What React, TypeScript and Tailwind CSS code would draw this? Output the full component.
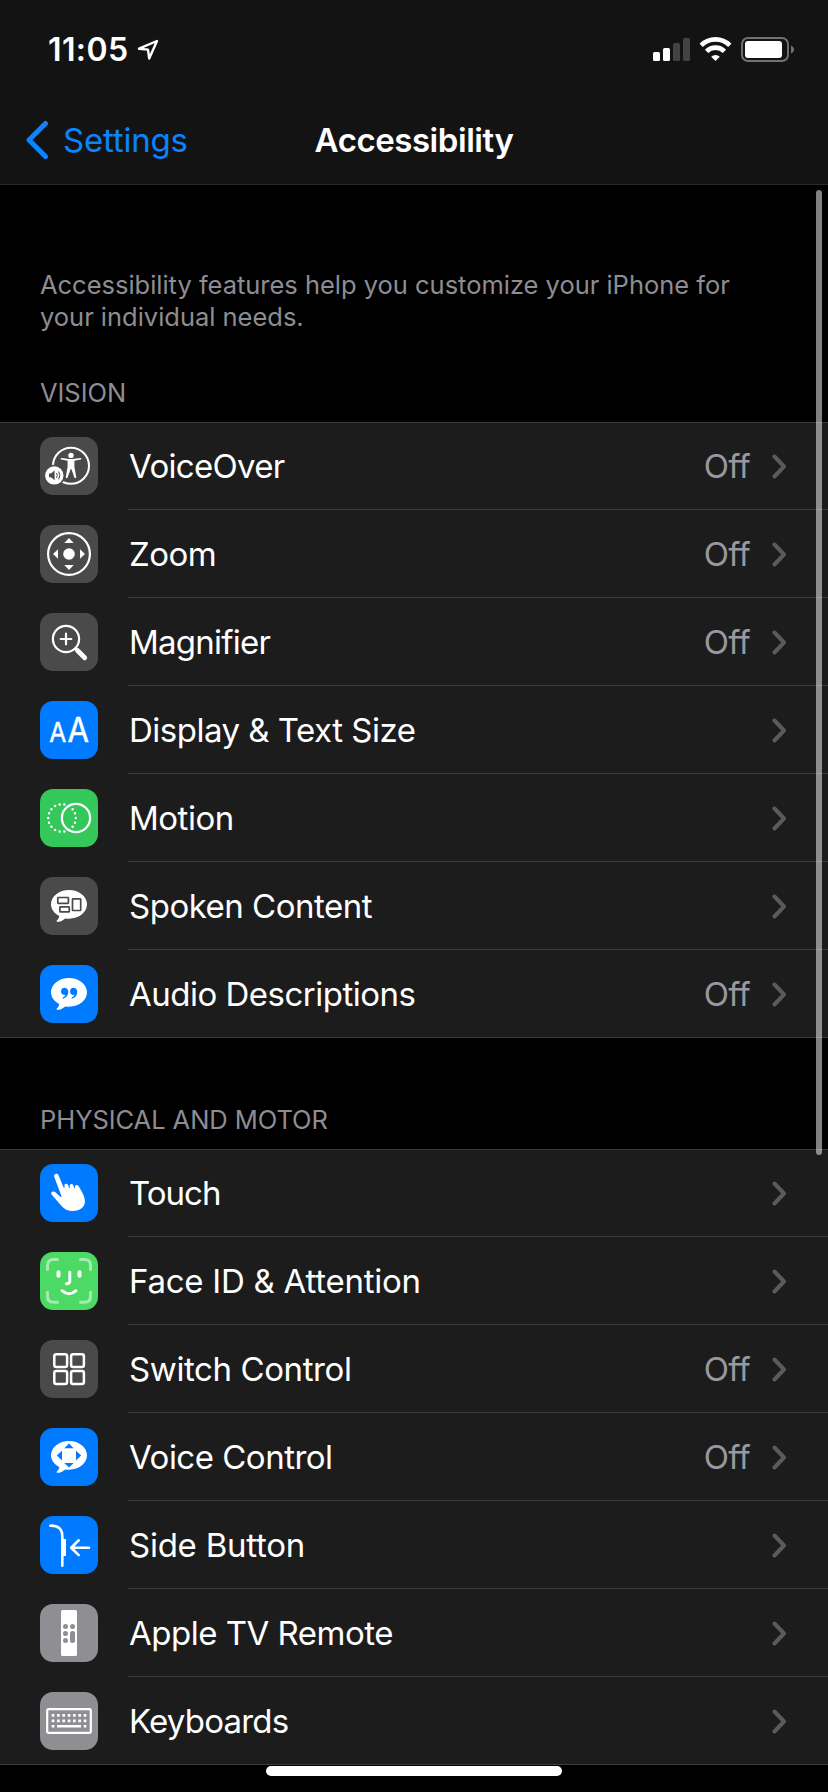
import { ReactNode } from 'react'

type Item = {
  label: string
  icon: ReactNode
  color: string
  value?: string
  tracking?: string
}

const BUBBLE =
  'M29 13c10 0 18 6.3 18 14.3s-8 14.4-18 14.4c-1.3 0-2.5-.1-3.7-.3-2.3 1.9-5.5 3.5-8.2 3.4-.7 0-.8-.7-.3-1.2 1.5-1.4 2.3-2.7 2.5-4.5C14.3 36.5 11 32.2 11 27.3 11 19.3 19 13 29 13z'

const VoiceOverIcon = () => (
  <>
    <circle cx="31" cy="28.7" r="18" fill="none" stroke="white" strokeWidth="2" />
    <circle cx="31" cy="18.4" r="2.7" />
    <path d="M21.5 20.9l7.5 1.2h4l7.5-1.2c1-.1 1.2 1.3.2 1.5l-6.3 1.4v6l1.8 10.3c.2 1.3-1.4 1.6-1.8.5L31.3 32h-.6l-3.1 8.6c-.4 1.1-2 .8-1.8-.5l1.8-10.3v-6l-6.3-1.4c-1-.2-.8-1.6.2-1.5z" />
    <circle cx="14.3" cy="38.4" r="10.7" fill="#4a4a4a" />
    <circle cx="14.3" cy="38.4" r="9.2" />
    <path d="M9 36.5h2l3.6-3v9.8l-3.6-3H9z" fill="#4a4a4a" />
    <path
      d="M16.5 36q1.6 2.4 0 4.8M18.6 34.5q2.6 3.9 0 7.8"
      fill="none"
      stroke="#4a4a4a"
      strokeWidth="1"
    />
  </>
)

const ZoomIcon = () => (
  <>
    <circle cx="29" cy="29" r="20.9" fill="none" stroke="white" strokeWidth="2.2" />
    <circle cx="29" cy="29" r="5.8" />
    <path d="M29 13l4.7 5h-9.4zM29 45l4.7-5h-9.4zM13 29l5-4.7v9.4zM45 29l-5-4.7v9.4z" />
  </>
)

const MagnifierIcon = () => (
  <g fill="none" stroke="white" strokeLinecap="round">
    <circle cx="26" cy="26" r="13.1" strokeWidth="2.2" />
    <path d="M20.7 26h10.6M26 20.7v10.6" strokeWidth="2.2" />
    <path d="M35.8 35.8l.8.8" strokeWidth="3" />
    <path d="M37.5 37.5l7.2 7.2" strokeWidth="4.8" />
  </g>
)

const TextSizeIcon = () => (
  <g stroke="white" strokeWidth=".5" strokeLinejoin="round">
    <text x="9.3" y="41.2" fontSize="26.5" textLength="17" lengthAdjust="spacingAndGlyphs">
      A
    </text>
    <text x="27.5" y="41.2" fontSize="33.5" textLength="21.5" lengthAdjust="spacingAndGlyphs">
      A
    </text>
  </g>
)

const MotionIcon = () => (
  <g fill="none" stroke="white">
    <circle cx="36" cy="29" r="14.1" strokeWidth="2.2" />
    <circle
      cx="22"
      cy="29"
      r="13.8"
      strokeWidth="2.5"
      strokeLinecap="round"
      pathLength="18"
      strokeDasharray="0 1"
    />
  </g>
)

const SpokenIcon = () => (
  <>
    <path d={BUBBLE} />
    <g fill="none" stroke="#4a4a4a" strokeWidth="1.7">
      <rect x="17.8" y="20.5" width="10.6" height="5.8" rx=".5" />
      <rect x="19.9" y="29.9" width="9.4" height="5" rx=".5" />
      <rect x="32.5" y="21.9" width="8.2" height="11.6" rx=".5" />
    </g>
  </>
)

const AudioIcon = () => (
  <>
    <path d={BUBBLE} />
    <path
      d="M24.5 22.8c2.3 0 3.8 1.9 3.8 4.3 0 3.2-2.2 5.7-4.8 6.5-1 .3-1.3-.8-.5-1.2 1.2-.6 2.1-1.5 2.5-2.6-2.6.5-4.5-1.2-4.5-3.4 0-2.1 1.5-3.6 3.5-3.6zM33.5 22.8c2.3 0 3.8 1.9 3.8 4.3 0 3.2-2.2 5.7-4.8 6.5-1 .3-1.3-.8-.5-1.2 1.2-.6 2.1-1.5 2.5-2.6-2.6.5-4.5-1.2-4.5-3.4 0-2.1 1.5-3.6 3.5-3.6z"
      fill="#007aff"
    />
  </>
)

const TouchIcon = () => (
  <path d="M14.2 12.8c-1-2.9 3.1-4.5 4.3-1.6l5 12c.3.7 1.1.6 1.1-.2l-.2-1.2c-.3-2.3 2.8-2.8 3.6-.8l1.1 2.8c.2.5.8.4.8-.1l-.3-1.6c-.2-2.3 2.9-2.9 3.7-.7l1 2.7c.2.5.8.4.8-.2l-.2-1c-.2-2.2 2.6-2.8 3.7-.8 3 5.5 6.3 10 6.3 15.400 0 5.6-4.9 9.5-12.3 9.5-4.8 0-8.3-1.7-11.3-5.2l-9.5-11c-1.9-2.4 1.3-4.5 3.3-2.7l5.3 4.7c.7.6 1.4.3 1.1-.6z" />
)

const FaceIcon = () => (
  <g fill="none" stroke="white" strokeLinecap="round">
    <path
      d="M7.5 17.5v-4q0-6 6-6h4M40.5 7.5h4q6 0 6 6v4M50.5 40.3v4q0 6-6 6h-4M17.5 50.3h-4q-6 0-6-6v-4"
      strokeWidth="3"
      strokeOpacity=".5"
    />
    <path d="M18.5 20.3v3.5M39.5 20.3v3.5" strokeWidth="4" />
    <path d="M29.8 20.3v8.700q0 2.7-2.8 2.7h-.6" strokeWidth="2.9" />
    <path d="M22 38.7q7 6.2 14 0" strokeWidth="2.9" />
  </g>
)

const SwitchIcon = () => (
  <g fill="none" stroke="white" strokeWidth="2.5">
    <rect x="14.3" y="14.3" width="12.8" height="12.8" rx="2" />
    <rect x="31.1" y="14.3" width="12.8" height="12.8" rx="2" />
    <rect x="14.3" y="31.1" width="12.8" height="12.8" rx="2" />
    <rect x="31.1" y="31.1" width="12.8" height="12.8" rx="2" />
  </g>
)

const VoiceControlIcon = () => (
  <>
    <path d={BUBBLE} />
    <path
      d="M24.3 20.2L29 15.6l4.7 4.6zM24.3 34.9l4.7 4.6 4.7-4.6zM22 22.7l-5.2 4.9 5.2 4.9zM36 22.7l5.2 4.9-5.2 4.9z"
      fill="#007aff"
    />
  </>
)

const SideButtonIcon = () => (
  <>
    <g fill="none" stroke="white" strokeWidth="2.6" strokeLinecap="round" strokeLinejoin="round">
      <path d="M10.3 9.7c7.5-.4 12 3.3 12 10.3v29.8" />
      <path d="M49 31.7H31.3M38.7 24.3l-7.5 7.4 7.5 7.4" />
    </g>
    <rect x="22" y="23" width="4" height="17" rx=".6" />
  </>
)

const RemoteIcon = () => (
  <>
    <rect x="21" y="6" width="16" height="46" rx="1.5" />
    <g fill="#8e8e93">
      <circle cx="25.5" cy="22.4" r="2.5" />
      <circle cx="32.5" cy="22.4" r="2.5" />
      <circle cx="25.5" cy="29.4" r="2.5" />
      <circle cx="25.5" cy="36.4" r="2.5" />
      <rect x="30" y="26.9" width="5" height="12" rx="2.5" />
    </g>
  </>
)

const KeyboardIcon = () => (
  <g fill="none" stroke="white">
    <rect x="7.2" y="17.2" width="43.6" height="23.6" rx="1.5" strokeWidth="2.2" />
    <path d="M11.7 23.3h34.7M11.7 28.8h34.7" strokeWidth="2.7" strokeDasharray="2.7 2.63" />
    <path d="M11.7 34.3h2.7M17 34.3h24M43.7 34.3h2.7" strokeWidth="2.6" />
  </g>
)

const vision: Item[] = [
  {
    label: 'VoiceOver',
    icon: <VoiceOverIcon />,
    color: 'bg-[#4a4a4a]',
    value: 'Off',
    tracking: 'tracking-[-0.7px]',
  },
  { label: 'Zoom', icon: <ZoomIcon />, color: 'bg-[#4a4a4a]', value: 'Off' },
  {
    label: 'Magnifier',
    icon: <MagnifierIcon />,
    color: 'bg-[#4a4a4a]',
    value: 'Off',
    tracking: 'tracking-[-0.75px]',
  },
  { label: 'Display & Text Size', icon: <TextSizeIcon />, color: 'bg-[#007aff]' },
  { label: 'Motion', icon: <MotionIcon />, color: 'bg-[#34c759]' },
  { label: 'Spoken Content', icon: <SpokenIcon />, color: 'bg-[#4a4a4a]' },
  { label: 'Audio Descriptions', icon: <AudioIcon />, color: 'bg-[#007aff]', value: 'Off' },
]

const motor: Item[] = [
  { label: 'Touch', icon: <TouchIcon />, color: 'bg-[#007aff]', tracking: 'tracking-[-1px]' },
  {
    label: 'Face ID & Attention',
    icon: <FaceIcon />,
    color: 'bg-[#4cd964]',
    tracking: 'tracking-[-0.25px]',
  },
  {
    label: 'Switch Control',
    icon: <SwitchIcon />,
    color: 'bg-[#4a4a4a]',
    value: 'Off',
    tracking: 'tracking-[-0.4px]',
  },
  { label: 'Voice Control', icon: <VoiceControlIcon />, color: 'bg-[#007aff]', value: 'Off' },
  {
    label: 'Side Button',
    icon: <SideButtonIcon />,
    color: 'bg-[#007aff]',
    tracking: 'tracking-[-0.25px]',
  },
  { label: 'Apple TV Remote', icon: <RemoteIcon />, color: 'bg-[#8e8e93]' },
  {
    label: 'Keyboards',
    icon: <KeyboardIcon />,
    color: 'bg-[#8e8e93]',
    tracking: 'tracking-[-0.8px]',
  },
]

const Row = ({ item }: { item: Item }) => (
  <li className="group flex h-[88px] pl-10 gap-[30px] border-[#3d3d41] first:-mt-px last:border-b">
    <div className={`mt-[15px] size-[58px] shrink-0 rounded-[13px] ${item.color}`}>
      <svg viewBox="0 0 58 58" className="size-full" fill="white">
        {item.icon}
      </svg>
    </div>
    <div className="flex flex-1 items-center border-b border-[#3d3d41] pl-px pr-[41px] group-last:border-b-0">
      <span className={`flex-1 whitespace-nowrap ${item.tracking ?? 'tracking-[-0.5px]'}`}>
        {item.label}
      </span>
      {item.value && (
        <span className="mr-[21px] tracking-[-0.7px] text-[#98989f]">{item.value}</span>
      )}
      <svg width="16" height="26" viewBox="0 0 16 26" fill="none">
        <path
          d="M3.5 3.5L13 13.5l-9.5 10"
          stroke="#5a5a5e"
          strokeWidth="4"
          strokeLinecap="round"
          strokeLinejoin="round"
        />
      </svg>
    </div>
  </li>
)

const Group = ({ items }: { items: Item[] }) => (
  <ul className="border-t border-[#3d3d41] bg-[#1c1c1c] text-[33px] leading-10">
    {items.map((item) => (
      <Row key={item.label} item={item} />
    ))}
  </ul>
)

const StatusBar = () => (
  <div className="flex h-24 items-center justify-between pt-[3px] pl-12 pr-[33px]">
    <div className="flex items-center gap-2">
      <span className="text-[32px] font-semibold leading-8 tracking-[0.4px]">11:05</span>
      <svg width="22" height="22" viewBox="0 0 22 22" fill="none">
        <path
          d="M20 2L2 9.700l9 .9 1.2 8.900z"
          stroke="white"
          strokeWidth="2.4"
          strokeLinejoin="round"
        />
      </svg>
    </div>
    {/* signal, wifi, battery */}
    <svg width="142" height="26" viewBox="0 0 142 26" fill="white">
      <rect x="0" y="15" width="7" height="9" rx="1.5" />
      <rect x="10" y="11" width="7" height="13" rx="1.5" />
      <rect x="20" y="6" width="7" height="18" rx="1.5" fill="#434343" />
      <rect x="30" y="1" width="7" height="23" rx="1.5" fill="#434343" />
      <g fill="none" stroke="white" strokeWidth="4.6">
        <path d="M48.2 8.3a20.3 20.3 0 0 1 28.6 0" />
        <path d="M53.6 14.4a12.4 12.4 0 0 1 17.8 0" />
      </g>
      <path d="M62.5 24l-4.3-4.3a6.2 6.2 0 0 1 8.6 0z" />
      <rect x="89" y="1" width="46" height="23" rx="6" fill="none" stroke="#727272" strokeWidth="1.9" />
      <rect x="92" y="4" width="37" height="17" rx="3" />
      <path d="M138 8.5c4 1.5 4 6.5 0 8z" fill="#727272" />
    </svg>
  </div>
)

const App = () => {
  return (
    <div className="relative h-[1792px] w-[828px] overflow-hidden bg-black text-white [font-family:Inter,sans-serif]">
      <header className="h-[185px] border-b border-[#2a2a2b] bg-[#131313]">
        <StatusBar />
        <div className="grid h-[88px] grid-cols-3 items-center text-[33px] leading-10">
          <a href="#" className="flex items-center gap-3.5 pl-6 text-[#0a84ff]">
            <svg width="25" height="40" viewBox="0 0 25 40" fill="none">
              <path
                d="M21.5 3.5L5 20l16.5 16.5"
                stroke="currentColor"
                strokeWidth="5"
                strokeLinecap="round"
                strokeLinejoin="round"
              />
            </svg>
            <span className="tracking-[-0.2px]">Settings</span>
          </a>
          <h1 className="text-center font-semibold tracking-[-0.45px]">Accessibility</h1>
        </div>
      </header>
      <main className="pt-[84px] text-[25.5px] leading-8">
        <p className="px-10 tracking-[-0.02px] text-[#8d8d93]">
          Accessibility features help you customize your iPhone for
          <br />
          your individual needs.
        </p>
        <h2 className="mt-11 mb-[13px] px-10 text-[#8d8d93] tracking-[-0.05px]">VISION</h2>
        <Group items={vision} />
        <h2 className="mt-[66px] mb-[13px] px-10 text-[#8d8d93] tracking-[-0.05px]">
          PHYSICAL AND MOTOR
        </h2>
        <Group items={motor} />
      </main>
      {/* scrollbar */}
      <div className="absolute top-[190px] right-1.5 h-[965px] w-1.5 rounded-full bg-white/50" />
      {/* home indicator */}
      <div className="absolute bottom-4 left-[266px] h-2.5 w-[296px] rounded-full bg-white" />
    </div>
  )
}

export default App
